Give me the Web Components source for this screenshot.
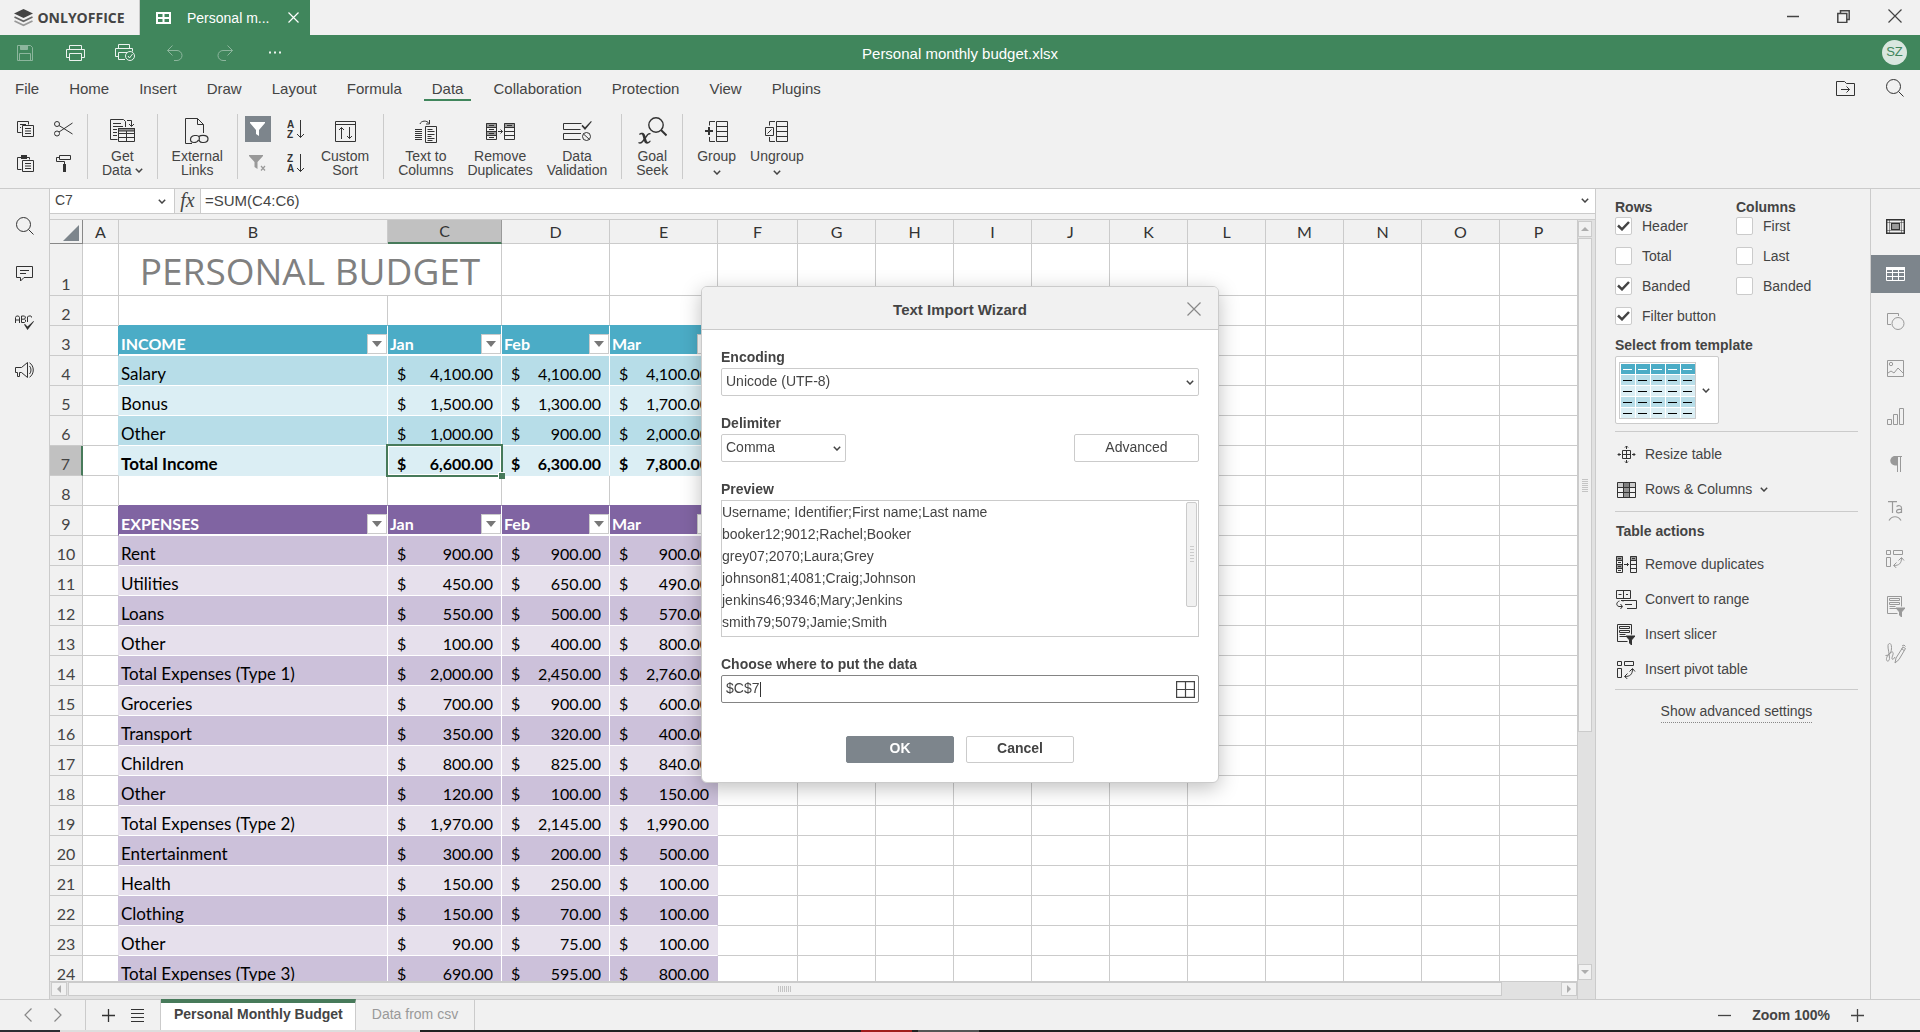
<!DOCTYPE html>
<html lang="en">
<head>
<meta charset="utf-8">
<title>Personal monthly budget.xlsx</title>
<style>
html, body { margin: 0; height: 100%; }
body { font: 14px/15px "Liberation Sans", Arial, sans-serif; color: #444; background: #f1f1f1; overflow: hidden; }
</style>
</head>
<body>
<budget-app></budget-app>
<script>
const BASE = `<style>
*, *::before, *::after { box-sizing: border-box; }
button { font: inherit; color: inherit; background: none; border: 0; padding: 0; margin: 0; display: flex; align-items: center; justify-content: center; }
input, select { font: inherit; color: inherit; margin: 0; border-radius: 0; outline: 0; }
a { color: inherit; text-decoration: none; }
</style>`;

const define = (name, render) => customElements.define(name, class extends HTMLElement {
  connectedCallback() {
    if (this.shadowRoot) return;
    this.attachShadow({ mode: 'open' }).innerHTML = BASE + render(this);
  }
});

const FRONT_PAGE = '<path d="M5.5 4.5h11v11h-11z"/><path d="M8 7.5h6M8 10h6M8 12.5h6"/>';
const SLICER = '<path d="M10.5 17.5H.5V.5h14v10"/><path d="M2.5 2.5h10v2h-10zM2.5 6.5h10v2h-10zM2.5 10.5h6M2.5 12.5h7"/><path class="f" d="M9 12h9l-3.5 4v5l-2-2v-3z"/>';
const PIVOT = '<path d="M.5.5h4v4h-4zM7.5.5h9v4h-9zM.5 7.5h4v9h-4z"/><path d="M8 15.5c5 0 7.5-2 7.5-7.5M10.5 12.5l-3 3 3 2.5M12.5 10.5l3-3 2.5 3"/>';

const ICONS = {
  logo: [19, 18, '<path class="f" stroke="none" fill="#444" d="M9.5 0l9.5 4.5-9.5 4.5L0 4.5z"/><path fill="none" stroke="#666" stroke-width="1.8" d="M.5 8l9 4.2 9-4.2"/><path fill="none" stroke="#999" stroke-width="1.8" d="M.5 12l9 4.2 9-4.2"/>'],
  sheet: [15, 12, '<path stroke-width="2" d="M1 1h13v10H1zM7.5 1v10M1 6h13"/>'],
  close: [11, 11, '<path stroke-width="1.2" d="M.5.5l10 10M10.5.5l-10 10"/>'],
  bigclose: [14, 14, '<path stroke-width="1.2" d="M.5.5l13 13M13.5.5l-13 13"/>'],
  min: [12, 12, '<path stroke-width="1.5" d="M0 6.5h12"/>'],
  restore: [13, 13, '<path stroke-width="1.5" d="M.8 3.5h9v9h-9zM3.5 3V.8h8.7v8.7H10"/>'],
  save: [16, 16, '<path d="M.5.5h13l2 2v13H.5zM2.5 15V8.5h11V15"/><path class="f" d="M3.5 1h7v3.5h-7z"/>'],
  print: [19, 16, '<path d="M3.5 4V.5h12V4M3.5 12.5h-3v-8h18v8h-3M3.5 8.5h12v7h-12z"/>'],
  printcheck: [20, 17, '<path d="M3.5 4V.5h11V4M3.5 12.5h-3v-8h17v3M10 15.5H3.5v-7H12"/><circle cx="15" cy="12" r="4.5"/><path d="M13 12l1.5 2 3-4"/>'],
  undo: [16, 16, '<path d="M5.5.5l-5 5 5 5M.5 5.5H10a5 5 0 0 1 0 10H7"/>'],
  redo: [16, 16, '<path d="M10.5.5l5 5-5 5M15.5 5.5H6a5 5 0 0 0 0 10h3"/>'],
  dots: [13, 3, '<path class="f" stroke="none" d="M0 .5h2v2H0zM5 .5h2v2H5zM10 .5h2v2h-2z"/>'],
  folder: [19, 15, '<path d="M.5 14.5V.5h8l2 2h8v12zM5 8.5h8.5M10.5 5.5l3 3-3 3"/>'],
  search: [18, 18, '<circle cx="7.5" cy="7.5" r="7"/><path d="M12.5 12.5l5 5"/>'],
  copy: [17, 16, '<path d="M4.5 11.5h-4V.5h11v3M3 3.5h6M3 6.5h1"/>' + FRONT_PAGE],
  paste: [17, 17, '<path d="M4.5 14.5h-4v-12h12v2"/><path class="f" stroke="none" d="M4 0h6v4H4z"/><g transform="translate(0 1)">' + FRONT_PAGE + '</g>'],
  cut: [19, 16, '<circle cx="3" cy="3" r="2.5"/><circle cx="3" cy="12.5" r="2.5"/><path d="M5 4.5L18.5 13M5 11L18.5 2"/>'],
  painter: [15, 17, '<path d="M3.5.5h11v4h-11zM3.5 2.5h-3v4h8V9"/><path class="f" stroke="none" d="M7 9h3v8H7z"/>'],
  getdata: [25, 24, '<path d="M7.5 20.5h-7V.5h13l2 2V8M3 4.5h8M3 7.5h10M3 10.5h4M3 13.5h4M3 16.5h4M17 1.5h4.5V7M19 5l2.5 2.5L24 5"/><path d="M8.5 9.5h16v13h-16zM8.5 14.5h16M8.5 18.5h16M16.5 12v10"/><path class="f" fill-opacity=".5" d="M8.5 9.5h16v2.5h-16z"/>'],
  extlinks: [24, 26, '<path d="M7 25.5H.5V.5h12l6 6V15M12.5.5v6h6"/><path stroke-width="1.2" d="M13.5 22c-1 2-2 2.5-4.5 2.5s-3.5-1-3.5-3 1-3.5 4-4h2c2.5.3 3 1.5 2.8 3M14 18.5c1-1 1.5-1.2 4-1.2s5 1.2 5 3.5-1.5 3.7-4.5 3.7h-1c-3 0-4-2-3-4.5"/>'],
  filter: [15, 15, '<path class="f" stroke="none" d="M0 0h15v1L9 8v6l-3-2V8L0 1z"/>'],
  clearfilter: [17, 16, '<path class="f" stroke="none" d="M0 0h14v1L8.5 7v7l-3-2V7L0 1z"/><path stroke-width="1.2" d="M12 11l4 4.5M16 11l-4 4.5"/>'],
  az: [17, 19, '<text x="0" y="8">A</text><text x="0" y="18">Z</text><path d="M13.5 0v17.5M10 14l3.5 3.5L17 14"/>'],
  za: [17, 19, '<text x="0" y="8">Z</text><text x="0" y="18">A</text><path d="M13.5 0v17.5M10 14l3.5 3.5L17 14"/>'],
  customsort: [21, 21, '<path d="M.5.5h20v20H.5zM.5 3.5h20M6.5 18V6.5M4 9l2.5-2.5L9 9M14.5 6v11.5M12 15l2.5 2.5L17 15"/>'],
  textcols: [22, 23, '<path d="M5 4c1-3.5 7-4 9-.5M14.5 0v4H11M0 9.5h7M0 11.5h7M0 13.5h7M0 15.5h7M0 17.5h7M0 19.5h7"/><path d="M10.5 6.5h11v16h-11zM12.5 9.5h5M12.5 11.5h7M12.5 14.5h7M12.5 16.5h4M12.5 18.5h7M12.5 20.5h5"/>'],
  removedup: [29, 17, '<path class="f" fill-opacity=".45" stroke="none" d="M0 0h11v4H0zM0 8h11v4H0zM18 0h11v4H18z"/><path d="M.5.5h10v16H.5zM18.5.5h10v16h-10zM.5 4.5h10M.5 8.5h10M.5 12.5h10M18.5 4.5h10M18.5 8.5h10M18.5 12.5h10M3 2.5h5M3 6.5h5M3 10.5h5M3 14.5h5M21 2.5h5M12 8.5h4.5M14.5 6.5l2 2-2 2"/>'],
  removedupsmall: [21, 17, '<path class="f" fill-opacity=".45" stroke="none" d="M0 0h7v4H0zM0 8h7v4H0zM14 0h7v4h-7z"/><path d="M.5.5h6v16h-6zM14.5.5h6v16h-6zM.5 4.5h6M.5 8.5h6M.5 12.5h6M14.5 4.5h6M14.5 8.5h6M14.5 12.5h6M2 2.5h3M2 6.5h3M2 10.5h3M2 14.5h3M16 2.5h3M8 8.5h4.5M11 7l1.5 1.5L11 10"/>'],
  validation: [29, 20, '<path d="M18.5 2.5H.5v6h17M18 12.5H.5v6h17"/><path class="f" stroke="none" d="M18.5 5l1-1.2 2.5 2.4L28 0l.8.8L22 9z"/><circle cx="23.5" cy="15.5" r="4"/><path d="M20.5 13l6 5.5"/>'],
  goalseek: [29, 28, '<circle cx="18" cy="8" r="7.2" stroke-width="1.4"/><path stroke-width="2" d="M23 13l5.5 5.5"/><path class="f" stroke="none" d="M1 17c1.5-1.5 5-2 6 1l1.5 5c.5 2.5 2 2.5 3.5.5l.8.5c-2 3.5-5.8 3.5-6.8 0L4.5 18.5C4 17 3 17 1.8 18z"/><path stroke-width="1.4" d="M12.5 17c-1-.8-2.5 0-3.5 1.5l-4 5.5c-1.5 2-3 2.5-4.5 1.5"/>'],
  group: [23, 21, '<path d="M11.5.5h11v20h-11zM11.5 5.5h11M11.5 10.5h11M11.5 15.5h11M10 .5H4.5v4M4.5 16v4.5H10"/><path stroke-width="2" d="M0 10h8M4 6v8"/>'],
  ungroup: [23, 21, '<path d="M11.5.5h11v20h-11zM11.5 5.5h11M11.5 10.5h11M11.5 15.5h11M10 .5H4.5v4M4.5 16v4.5H10M.5 6.5h8v8h-8zM2.5 12.5l4-4"/>'],
  chev: [8, 5, '<path stroke-width="1.5" d="M.8.8L4 4 7.2.8"/>'],
  comment: [18, 16, '<path d="M.5.5h16v11H8l-3.5 3.5v-3.5h-4zM4 4.5h9M4 7.5h6"/>'],
  spell: [19, 15, '<path d="M.5 8V2.5l1-1.5h2l1 1.5V8M.5 5h4M6.5 1v6.5h3l1-1V5l-1-.8h-3M9.5 4l.8-1V1.8L9.5 1h-3M16.5 2.5V1.5L16 1h-2.5l-1 1V7"/><path class="f" stroke="none" d="M9 9.5l1-.5 2.5 2.5L18.5 6l.5.6-6.5 8.4z"/>'],
  speaker: [20, 16, '<path d="M.5 5.5h6l6-5v15l-6-5h-2v4h-2v-4h-2zM14.5 4c2 2 2 6 0 8M14.5.8c5 3 5 11.4 0 14.4"/>'],
  cellset: [19, 15, '<path d="M.7.7h17.6v13.6H.7z" stroke-width="1.4"/><path stroke-opacity=".5" d="M3.5 1v13M15.5 1v13M1 3.5h17M1 11.5h17"/><path class="f" fill-opacity=".45" stroke-width="1.2" d="M5.5 4.5h8v6h-8z"/>'],
  tableset: [19, 14, '<path class="f" stroke="none" d="M0 0h19v3H0z"/><path d="M.5 1v12.5h18V1M.5 5.5h18M.5 9.5h18M6.5 3v10M12.5 3v10"/>'],
  shape: [18, 17, '<path d="M4 11.5H.5V.5h11V3"/><circle cx="11" cy="10.5" r="6"/>'],
  image: [17, 17, '<path d="M.5.5h16v16H.5zM1 13l3-2 3 2 4-5 5 5"/><circle cx="4" cy="4" r="1.7"/>'],
  chart: [17, 17, '<path d="M.5 11.5h4v5h-4zM6.5 6.5h4v10h-4zM12.5.5h4v16h-4z"/>'],
  para: [12, 16, '<path class="f" stroke="none" d="M7 0v9.5H5A4.7 4.7 0 0 1 5 0z"/><path d="M4 .5h8M7.5.5V16M10.5.5V16"/>'],
  art: [15, 20, '<path stroke-width="1.2" d="M0 .6h9M4.5.6V12M8.5 5.5c2-1.5 5-1 5 1.5v5M13.5 8.5c-3-.5-5 .2-5 2s3.5 2 5 .2M1 19.5c3-5 9-5 12 0"/>'],
  pivot: [19, 18, PIVOT],
  slicer: [18, 21, SLICER],
  sign: [21, 21, '<path d="M.5 12.5c5 0 6-4 6-8 0-5-3-5-3.5-2-.3 3 1.5 8 1.5 13-.5 4-3.5 3-3 0s4-7 6-6.5c2 1-1 5-.5 7 1 1 2-.5 3-2M10 20l1-5 7-11 2.5 1.5-6.5 11zM16.5 5.5l2.5 2M17 3l2-1 1.5 1.5"/>'],
  resize: [19, 19, '<path d="M5.5 5.5h8v8h-8zM9.5 5.5v8M5.5 9.5h8"/><path d="M9.5 1v3M8 2.5L9.5 1 11 2.5M9.5 15v3M8 16.5L9.5 18l1.5-1.5M4 9.5H1M2.5 8L1 9.5 2.5 11M15 9.5h3M16.5 8L18 9.5 16.5 11"/>'],
  rowscols: [19, 16, '<path class="f" stroke="none" fill-opacity=".2" d="M0 0h19v5H0z"/><path class="f" stroke="none" fill-opacity=".5" d="M6 0h7v16H6z"/><path d="M.5.5h18v15H.5zM.5 5.5h18M.5 10.5h18M6.5.5v15M12.5.5v15"/>'],
  convert: [21, 19, '<path d="M.5.5h14v8H.5zM7.5.5v8M2.5 4.5h3M10 4l1 1 1-1"/><path d="M7 11.5V10.5M5 10.5h15.5v8H11M9 14.5h7M3.5 11C0 12 0 16 3 16.5h3M4.5 14l2 2.5-2 2.5"/>'],
  picker: [19, 17, '<path d="M.6.6h17.8v15.8H.6zM9.5 1v15M1 8.5h17" stroke-width="1.2"/>'],
  prev: [8, 14, '<path stroke-width="1.2" d="M7.5.5L1 7l6.5 6.5"/>'],
  next: [8, 14, '<path stroke-width="1.2" d="M.5.5L7 7 .5 13.5"/>'],
  plus: [13, 13, '<path stroke-width="1.3" d="M6.5 0v13M0 6.5h13"/>'],
  minus: [13, 13, '<path stroke-width="1.3" d="M0 6.5h13"/>'],
  list: [13, 13, '<path d="M0 .5h13M0 4.5h13M0 8.5h13M0 12.5h13"/>']
};

define('app-icon', el => {
  const [w, h, body] = ICONS[el.getAttribute('name')];
  return `<style>:host{display:inline-flex;flex:none} svg{display:block} .f{fill:currentColor}
  text{font:bold 10px "Liberation Sans",sans-serif;fill:currentColor;stroke:none}</style>
  <svg width="${w}" height="${h}" viewBox="0 0 ${w} ${h}" fill="none" stroke="currentColor" aria-hidden="true">${body}</svg>`;
});
const icon = n => `<app-icon name="${n}"></app-icon>`;

define('title-bar', () => `<style>
:host{display:flex;height:35px;background:#f1f1f1}
.home{width:140px;border-right:1px solid #cbcbcb;gap:4px;font:bold 14px/18px "Open Sans",sans-serif;color:#444}
.doc{width:170px;background:#40865c;color:#fff;display:flex;align-items:center;padding:0 11px 0 16px;gap:16px}
.doc span{flex:1;white-space:nowrap;padding-top:1px}
.win{margin-left:auto;display:flex}
.win button{width:51px;padding-bottom:3px}
</style>
<button class="home">${icon('logo')}ONLYOFFICE</button>
<div class="doc">${icon('sheet')}<span>Personal m...</span><button aria-label="Close tab">${icon('close')}</button></div>
<div class="win"><button aria-label="Minimize">${icon('min')}</button><button aria-label="Restore">${icon('restore')}</button><button aria-label="Close">${icon('bigclose')}</button></div>`);

define('quick-bar', () => `<style>
:host{display:grid;grid-template-columns:1fr auto 1fr;align-items:center;height:35px;background:#40865c;color:#fff}
.l{display:flex}
.l button{width:50px;height:35px;opacity:.9}
.l button.off{opacity:.4}
.t{font-size:15px;line-height:17px;padding-top:1px}
.av{justify-self:end;width:25px;height:25px;margin-right:13px;border-radius:50%;background:#d9e7df;color:#40865c;font-size:13px;padding-bottom:2px}
</style>
<div class="l"><button class="off" aria-label="Save">${icon('save')}</button><button aria-label="Print">${icon('print')}</button><button aria-label="Quick print">${icon('printcheck')}</button><button class="off" aria-label="Undo">${icon('undo')}</button><button class="off" aria-label="Redo">${icon('redo')}</button><button aria-label="More">${icon('dots')}</button></div>
<span class="t">Personal monthly budget.xlsx</span>
<button class="av">SZ</button>`);

define('menu-tabs', () => `<style>
:host{display:flex;align-items:center;height:36px;padding:0 16px 0 7px;gap:14px;font-size:15px;line-height:17px}
a{padding:4px 8px 2px;border-bottom:2px solid transparent}
a:first-child{margin-right:1px}
a.on{border-color:#40865c}
.r{margin-left:auto;display:flex;gap:31px;color:#333}
</style>
${['File','Home','Insert','Draw','Layout','Formula','Data','Collaboration','Protection','View','Plugins'].map(t => `<a href="#${t.toLowerCase()}"${t === 'Data' ? ' class="on"' : ''}>${t}</a>`).join('')}
<div class="r"><button aria-label="Open location">${icon('folder')}</button><button aria-label="Search">${icon('search')}</button></div>`);

define('ribbon-button', el => `<style>
:host{display:block}
button{flex-direction:column;padding:0 7px;height:66px;justify-content:flex-start;font-size:14px;line-height:14px;text-align:center}
.i{height:34px;display:flex;align-items:center;margin-bottom:1px;color:#333}
.t{display:block;white-space:nowrap}
.t span{display:inline-flex;align-items:center;justify-content:center;gap:3px;min-height:14px}
</style>
<button><span class="i">${icon(el.getAttribute('icon'))}</span><span class="t"><slot></slot><br><span><slot name="second"></slot>${el.hasAttribute('menu') ? icon('chev') : ''}</span></span></button>`);

define('ribbon-bar', () => `<style>
:host{display:flex;height:83px;padding:8px 12px 9px;border-bottom:1px solid #cbcbcb}
.g{display:grid;grid-template-columns:26px 26px;grid-template-rows:26px 26px;gap:8px 12px;padding-top:2px;margin-right:5px;color:#333}
.g.one{margin-right:4px}
.s{width:1px;margin:0 7px;background:#cbcbcb;flex:none}
.on{background:#7d858c;color:#fff}
.off{color:#999}
</style>
<div class="g one"><button aria-label="Copy">${icon('copy')}</button><button aria-label="Cut">${icon('cut')}</button><button aria-label="Paste">${icon('paste')}</button><button aria-label="Copy style">${icon('painter')}</button></div>
<div class="s"></div>
<ribbon-button icon="getdata" menu>Get<span slot="second">Data</span></ribbon-button>
<div class="s"></div>
<ribbon-button icon="extlinks">External<span slot="second">Links</span></ribbon-button>
<div class="s"></div>
<div class="g"><button class="on" aria-label="Filter">${icon('filter')}</button><button aria-label="Sort ascending">${icon('az')}</button><button class="off" aria-label="Clear filter">${icon('clearfilter')}</button><button aria-label="Sort descending">${icon('za')}</button></div>
<ribbon-button icon="customsort">Custom<span slot="second">Sort</span></ribbon-button>
<div class="s"></div>
<ribbon-button icon="textcols">Text to<span slot="second">Columns</span></ribbon-button>
<ribbon-button icon="removedup">Remove<span slot="second">Duplicates</span></ribbon-button>
<ribbon-button icon="validation">Data<span slot="second">Validation</span></ribbon-button>
<div class="s"></div>
<ribbon-button icon="goalseek">Goal<span slot="second">Seek</span></ribbon-button>
<div class="s"></div>
<ribbon-button icon="group" menu>Group</ribbon-button>
<ribbon-button icon="ungroup" menu>Ungroup</ribbon-button>`);

define('left-rail', () => `<style>
:host{display:flex;flex-direction:column;gap:10px;width:50px;padding-top:18px;border-right:1px solid #cbcbcb;color:#333;flex:none}
button{height:38px}
</style>
<button aria-label="Search">${icon('search')}</button><button aria-label="Comments">${icon('comment')}</button><button aria-label="Spell checking">${icon('spell')}</button><button aria-label="Feedback">${icon('speaker')}</button>`);

define('right-rail', () => `<style>
:host{display:flex;flex-direction:column;justify-content:space-between;width:49px;height:466px;color:#999;flex:none}
button{height:38px}
.a{color:#333}
.on{background:#7d858c;color:#fff}
</style>
${[['cellset','Cell settings'],['tableset','Table settings'],['shape','Shape settings'],['image','Image settings'],['chart','Chart settings'],['para','Paragraph settings'],['art','Text art settings'],['pivot','Pivot settings'],['slicer','Slicer settings'],['sign','Signature settings']].map(([n, l], i) => `<button aria-label="${l}" class="${i === 0 ? 'a' : i === 1 ? 'on' : ''}">${icon(n)}</button>`).join('')}`);

define('formula-bar', () => `<style>
:host{display:flex;height:25px;background:#fff;border-bottom:1px solid #cbcbcb;font-size:14px}
.n{display:flex;width:124px;padding:0 8px 2px 5px;align-items:center}
.n input{flex:1;min-width:0;border:0;padding:0;background:none}
.n button{padding-top:3px}
.fx{width:27px;border:solid #cbcbcb;border-width:0 1px;background:#f1f1f1;font:italic 20px/20px "Liberation Serif",serif;padding-bottom:2px}
.f{flex:1;min-width:0;border:0;padding:0 4px 2px;background:none;font-size:15px}
.e{width:20px;padding-bottom:2px}
</style>
<div class="n"><input value="C7" aria-label="Name box"><button aria-label="Names">${icon('chev')}</button></div>
<button class="fx">fx</button>
<input class="f" value="=SUM(C4:C6)" aria-label="Formula">
<button class="e" aria-label="Expand">${icon('chev')}</button>`);

define('scroll-bar', el => {
  const v = el.hasAttribute('vertical');
  return `<style>
:host{display:flex;flex-direction:${v ? 'column' : 'row'};gap:1px;background:#e1e1e1;${v ? 'border-left:1px solid #cbcbcb;padding:1px 3px 19px 0' : 'border-top:1px solid #cbcbcb;padding:0 0 3px 1px'}}
button,.th{border:1px solid #cbcbcb;background:#f1f1f1}
button{${v ? 'height:16px' : 'width:16px'};flex:none}
.track{flex:1;display:flex;flex-direction:inherit}
.th{flex:${v ? '493 1 0' : '1434 1 0'};display:flex;align-items:center;justify-content:center}
.rest{flex:${v ? '231 1 0' : '58 1 0'}}
.grip{${v ? 'width:6px;height:13px' : 'width:14px;height:6px'};background:repeating-linear-gradient(${v ? 'to bottom' : 'to right'},#c4c4c4 0 1px,transparent 1px 2px)}
path{fill:#adadad}
svg{display:block}
</style>
<button aria-label="Scroll back"><svg width="8" height="8"><path d="${v ? 'M0 6l4-4 4 4z' : 'M6 0L2 4l4 4z'}"/></svg></button>
<div class="track"><div class="th"><div class="grip"></div></div><div class="rest"></div></div>
<button aria-label="Scroll forward"><svg width="8" height="8"><path d="${v ? 'M0 2l4 4 4-4z' : 'M2 0l4 4-4 4z'}"/></svg></button>`;
});

const ROWS = {
  4: ['Salary','4,100.00','4,100.00','4,100.00'], 5: ['Bonus','1,500.00','1,300.00','1,700.00'],
  6: ['Other','1,000.00','900.00','2,000.00'], 7: ['Total Income','6,600.00','6,300.00','7,800.00'],
  10: ['Rent','900.00','900.00','900.00'], 11: ['Utilities','450.00','650.00','490.00'],
  12: ['Loans','550.00','500.00','570.00'], 13: ['Other','100.00','400.00','800.00'],
  14: ['Total Expenses (Type 1)','2,000.00','2,450.00','2,760.00'], 15: ['Groceries','700.00','900.00','600.00'],
  16: ['Transport','350.00','320.00','400.00'], 17: ['Children','800.00','825.00','840.00'],
  18: ['Other','120.00','100.00','150.00'], 19: ['Total Expenses (Type 2)','1,970.00','2,145.00','1,990.00'],
  20: ['Entertainment','300.00','200.00','500.00'], 21: ['Health','150.00','250.00','100.00'],
  22: ['Clothing','150.00','70.00','100.00'], 23: ['Other','90.00','75.00','100.00'],
  24: ['Total Expenses (Type 3)','690.00','595.00','800.00']
};
const HEADS = { 3: 'INCOME', 9: 'EXPENSES' };
const COLS = 'ABCDEFGHIJKLMNOP'.split('');

function sheetRow(n) {
  const empties = k => '<td></td>'.repeat(k);
  const label = `<th scope="row"${n === 7 ? ' class="sel"' : ''}>${n}</th>`;
  if (n === 1) return `<tr class="first">${label}<td></td><td colspan="2" class="title">PERSONAL BUDGET</td>${empties(13)}</tr>`;
  if (HEADS[n]) {
    const cells = [HEADS[n], 'Jan', 'Feb', 'Mar'].map((t, i) => `<td class="c${i}"><div class="h"><span>${t}</span><button aria-label="Filter ${t}"><svg width="10" height="6"><path d="M0 0h10L5 6z"/></svg></button></div></td>`).join('');
    return `<tr class="head ${n === 3 ? 'blue' : 'violet'}">${label}<td class="a"></td>${cells}${empties(11)}</tr>`;
  }
  if (ROWS[n]) {
    const [t, ...m] = ROWS[n];
    const money = m.map((v, i) => `<td class="c${i + 1}${n === 7 && i === 0 ? ' cur' : ''}"><div class="m"><span>$</span><span>${v}</span></div></td>`).join('');
    const tone = (n < 8 ? 'blue' : 'violet') + (n % 2 ? ' light' : ' dark') + (n === 7 ? ' total' : '');
    return `<tr class="data ${tone}">${label}<td class="a"></td><td class="c0">${t}</td>${money}${empties(11)}</tr>`;
  }
  return `<tr class="before${n}">${label}<td></td>${'<td class="t"></td>'.repeat(4)}${empties(11)}</tr>`;
}

define('sheet-grid', () => `<style>
:host{display:block;overflow:hidden;background:#fff;font:16px/22px Lato,Carlito,sans-serif;color:#000}
table{width:100%;table-layout:fixed;border-collapse:separate;border-spacing:0}
th,td{padding:0;height:30px;border:solid #cbcbcb;border-width:0 1px 1px 0;vertical-align:bottom;white-space:nowrap}
th{background:#f1f1f1;color:#444;font-weight:400;text-align:center}
tr>:last-child{border-right:0}
thead th{height:24px;vertical-align:middle;color:#333}
.corner{border-color:#888}
.corner svg{display:block;margin:2px 0 0 13px}
thead .sel{background:#c1c1c1;border-bottom:2px solid #477a5a;border-right-color:#999}
tbody .sel{background:#c1c1c1;border-right:2px solid #477a5a}
.first>*{height:52px}
.title{font:37px/41px "Open Sans",sans-serif;color:#808080;text-align:center;vertical-align:middle;padding-top:2px}
.blue{--h:#4bacc6;--d:#b7dde8;--l:#dbeef4}
.violet{--h:#8064a2;--d:#ccc1da;--l:#e6e0ec}
.head{--bg:var(--h)} .dark{--bg:var(--d)} .light{--bg:var(--l)}
.a{border-right-color:var(--bg)}
.c0,.c1,.c2,.c3{background:var(--bg);border-color:#fff}
.c3{border-right-color:var(--bg)}
.data .c0{padding-left:2px;font-size:17px}
.total .c0,.total .c1,.total .c2,.total .c3{border-bottom-color:var(--bg);font-weight:700}
.before2 .t{border-bottom-color:#4bacc6}
.before8 .t{border-bottom-color:#8064a2}
.head .c0,.head .c1,.head .c2,.head .c3{border-bottom-width:2px;color:#fff;font-weight:700}
.h{display:flex;align-items:flex-end;justify-content:space-between;padding-left:2px;line-height:20px}
.h button{width:20px;height:20px;background:#fff;border:1px solid #cbcbcb}
.h path{fill:#777}
.m{display:flex;justify-content:space-between;padding:0 8px 0 9px}
.cur{position:relative}
.cur::before{content:"";position:absolute;z-index:1;inset:-2px -2px -2px -2px;border:2px solid #477a5a;outline:1px solid #fff;outline-offset:-3px}
.cur::after{content:"";position:absolute;z-index:2;right:-4px;bottom:-4px;width:7px;height:7px;background:#477a5a;border:solid #fff;border-width:1px 0 0 1px}
</style>
<table aria-label="Worksheet">
<colgroup><col style="width:33px"><col style="width:36px"><col style="width:269px"><col style="width:114px"><col style="width:108px"><col style="width:108px"><col style="width:80px">${'<col style="width:78px">'.repeat(9)}<col></colgroup>
<thead><tr><th class="corner"><svg width="16" height="16"><path d="M16 0v16H0z" fill="#7d858c"/></svg></th>${COLS.map(c => `<th scope="col"${c === 'C' ? ' class="sel"' : ''}>${c}</th>`).join('')}</tr></thead>
<tbody>${Array.from({ length: 24 }, (_, i) => sheetRow(i + 1)).join('')}</tbody>
</table>`);

define('sheet-area', () => `<style>
:host{display:flex;flex-direction:column;flex:1;min-width:0}
.g{flex:1;min-height:0;margin-top:5px;border-top:1px solid #cbcbcb;display:grid;grid-template-columns:minmax(0,1fr) 18px;grid-template-rows:minmax(0,1fr) 18px}
scroll-bar[vertical]{grid-column:2;grid-row:1/3}
</style>
<formula-bar></formula-bar>
<div class="g"><sheet-grid></sheet-grid><scroll-bar vertical></scroll-bar><scroll-bar></scroll-bar></div>`);

define('check-box', el => `<style>
:host{display:block}
label{display:flex;gap:10px;align-items:center}
.b{display:grid;width:17px;height:18px;flex:none}
.b>*{grid-area:1/1}
input{appearance:none;width:17px;height:18px;background:#fff;border:1px solid #cbcbcb;border-radius:2px}
svg{display:none;place-self:center}
input:checked+svg{display:block}
</style>
<label><span class="b"><input type="checkbox"${el.hasAttribute('checked') ? ' checked' : ''}><svg width="13" height="10" fill="none" stroke="#444" stroke-width="2.5"><path d="M1 4.5L5 8.3 12 1"/></svg></span><span><slot></slot></span></label>`);

define('panel-action', el => `<style>
:host{display:block}
button{height:35px;gap:8px;justify-content:flex-start}
.i{width:22px;display:flex;justify-content:center;color:#333}
</style><button><span class="i">${icon(el.getAttribute('icon'))}</span><slot></slot>${el.hasAttribute('menu') ? icon('chev') : ''}</button>`);

const thumb = () => {
  const fills = ['#4bacc6', '#b7dde8', '#dbeef4', '#b7dde8', '#dbeef4'];
  return fills.map((f, r) => Array.from({ length: 5 }, (_, c) => `<path fill="${f}" d="M${1 + c * 15} ${1 + r * 11}h14v10h-14z"/><path stroke="${r ? '#000' : '#fff'}" d="M${3 + c * 15} ${6.5 + r * 11}h9"/>`).join('')).join('');
};

define('table-panel', () => `<style>
:host{display:block;width:276px;padding:11px 12px 0 19px;border:solid #cbcbcb;border-width:0 1px;flex:none}
h3{font:bold 14px/15px "Liberation Sans",sans-serif;margin:0}
.c{display:grid;grid-template-columns:121px 1fr;row-gap:12px}
.c h3{margin-bottom:-10px}
.c>:nth-child(9){grid-column:1/3}
.tp{width:104px;height:68px;background:#fff;border:1px solid #cbcbcb;border-radius:2px;gap:6px;margin:3px 0 7px;padding-right:5px}
.tp svg{border:1px solid #cbcbcb}
.s1{margin-top:13px}
hr{border:0;border-top:1px solid #cbcbcb;margin:0}
.ac{padding:5px 0 4px}
.s2{padding:12px 0 8px 1px}
.last{padding-bottom:2px}
.adv{display:flex;justify-content:center;padding:14px 0 0}
.adv a{border-bottom:1px dotted #888;padding-bottom:3px}
</style>
<div class="c"><h3>Rows</h3><h3>Columns</h3>
<check-box checked>Header</check-box><check-box>First</check-box>
<check-box>Total</check-box><check-box>Last</check-box>
<check-box checked>Banded</check-box><check-box>Banded</check-box>
<check-box checked>Filter button</check-box></div>
<h3 class="s1">Select from template</h3>
<button class="tp" aria-label="Table template"><svg width="77" height="57">${thumb()}</svg>${icon('chev')}</button>
<hr>
<div class="ac"><panel-action icon="resize">Resize table</panel-action><panel-action icon="rowscols" menu>Rows &amp; Columns</panel-action></div>
<hr>
<h3 class="s2">Table actions</h3>
<div class="last"><panel-action icon="removedupsmall">Remove duplicates</panel-action><panel-action icon="convert">Convert to range</panel-action><panel-action icon="slicer">Insert slicer</panel-action><panel-action icon="pivot">Insert pivot table</panel-action></div>
<hr>
<div class="adv"><a href="#advanced">Show advanced settings</a></div>`);

define('sheet-footer', () => `<style>
:host{display:block;flex:none}
.b{display:flex;height:31px;border-top:1px solid #cbcbcb}
.nav,.add{display:flex;align-items:center;justify-content:center;border-right:1px solid #cbcbcb}
.nav{width:86px;gap:22px;color:#888}
.add{width:75px;gap:16px;color:#333}
.tab{border-right:1px solid #cbcbcb;padding:0 16px 2px;color:#999}
.on{background:#fff;border-top:4px solid #477a5a;margin-top:-1px;color:#444;font-weight:700;padding:0 12px 4px 13px}
.z{margin-left:auto;display:flex;align-items:center;gap:21px;padding-right:56px;font-weight:700;color:#444}
.task{height:2px;background:linear-gradient(to right,#2b2d33 60px,#ddd 60px 420px,#222 420px 861px,#a01c1c 861px 912px,#222 912px 918px,#555 918px 979px,#222 979px)}
</style>
<div class="b"><div class="nav"><button aria-label="Previous sheet">${icon('prev')}</button><button aria-label="Next sheet">${icon('next')}</button></div>
<div class="add"><button aria-label="Add sheet">${icon('plus')}</button><button aria-label="List of sheets">${icon('list')}</button></div>
<button class="tab on">Personal Monthly Budget</button><button class="tab">Data from csv</button>
<div class="z"><button aria-label="Zoom out">${icon('minus')}</button><span>Zoom 100%</span><button aria-label="Zoom in">${icon('plus')}</button></div></div>
<div class="task"></div>`);

define('import-dialog', () => `<style>
:host{position:fixed;inset:37px 0 0;display:grid;place-items:center;z-index:5;pointer-events:none}
.d{pointer-events:auto;width:518px;background:#fff;border:1px solid #cbcbcb;border-radius:6px;box-shadow:0 5px 20px rgba(0,0,0,.25);overflow:hidden}
header{height:43px;display:grid;grid-template-columns:40px 1fr 40px;align-items:center;text-align:center;background:#f1f1f1;border-bottom:1px solid #cbcbcb;font-weight:700;font-size:15px;line-height:17px;padding:2px 4px 0}
header button{color:#888}
.b{padding:19px 19px;display:flex;flex-direction:column}
label,.l{font-weight:700;line-height:17px;padding-bottom:2px}
.sel{display:grid;height:28px}
.sel>*{grid-area:1/1}
.sel.short{width:125px}
select{appearance:none;width:100%;border:1px solid #cbcbcb;border-radius:2px;background:#fff;padding:0 20px 1px 4px}
.sel app-icon{justify-self:end;align-self:center;margin-right:5px;pointer-events:none}
.row{display:flex;justify-content:space-between}
.btn{height:28px;width:125px;border:1px solid #cbcbcb;border-radius:2px;background:#fff;padding-bottom:1px}
.s{margin-top:19px}
.p{height:137px;border:1px solid #cbcbcb;display:flex;justify-content:space-between;line-height:22px}
.p p{margin:0}
.th{width:11px;height:105px;margin:1px 1px 0 0;border:1px solid #cbcbcb;border-radius:2px;background:#f1f1f1;display:flex;align-items:center;justify-content:center}
.th i{width:4px;height:17px;background:repeating-linear-gradient(to bottom,#cbcbcb 0 1px,transparent 1px 3px)}
.in{display:flex;align-items:center;height:28px;border:1px solid #848484;border-radius:2px;padding:0 3px 0 4px}
.in input{field-sizing:content;min-width:0;width:34px;border:0;padding:0 0 1px;background:none}
.in i{width:1px;height:15px;background:#333}
.in button{margin-left:auto}
.f{display:flex;justify-content:center;gap:12px;margin-top:33px}
.f .btn{width:108px;height:27px;font-weight:700;padding-bottom:3px}
.f .ok{background:#7d858c;color:#fff;border-color:#7d858c}
</style>
<div class="d" role="dialog" aria-label="Text Import Wizard"><header><span></span><span>Text Import Wizard</span><button aria-label="Close">${icon('bigclose')}</button></header>
<div class="b">
<label for="enc">Encoding</label>
<div class="sel"><select id="enc"><option>Unicode (UTF-8)</option></select>${icon('chev')}</div>
<label for="del" class="s">Delimiter</label>
<div class="row"><div class="sel short"><select id="del"><option>Comma</option></select>${icon('chev')}</div><button class="btn">Advanced</button></div>
<div class="l s">Preview</div>
<div class="p"><div><p>Username; Identifier;First name;Last name</p><p>booker12;9012;Rachel;Booker</p><p>grey07;2070;Laura;Grey</p><p>johnson81;4081;Craig;Johnson</p><p>jenkins46;9346;Mary;Jenkins</p><p>smith79;5079;Jamie;Smith</p></div><div class="th"><i></i></div></div>
<label for="dst" class="s">Choose where to put the data</label>
<div class="in"><input id="dst" value="$C$7"><i></i><button aria-label="Select data">${icon('picker')}</button></div>
<div class="f"><button class="btn ok">OK</button><button class="btn">Cancel</button></div>
</div></div>`);

define('budget-app', () => `<style>
:host{display:flex;flex-direction:column;height:100vh}
.w{flex:1;min-height:0;display:flex;overflow:hidden}
.r{padding-top:18px}
</style>
<title-bar></title-bar><quick-bar></quick-bar><menu-tabs></menu-tabs><ribbon-bar></ribbon-bar>
<div class="w"><left-rail></left-rail><sheet-area></sheet-area><table-panel></table-panel><div class="r"><right-rail></right-rail></div></div>
<sheet-footer></sheet-footer>
<import-dialog></import-dialog>`);
</script>
</body>
</html>
